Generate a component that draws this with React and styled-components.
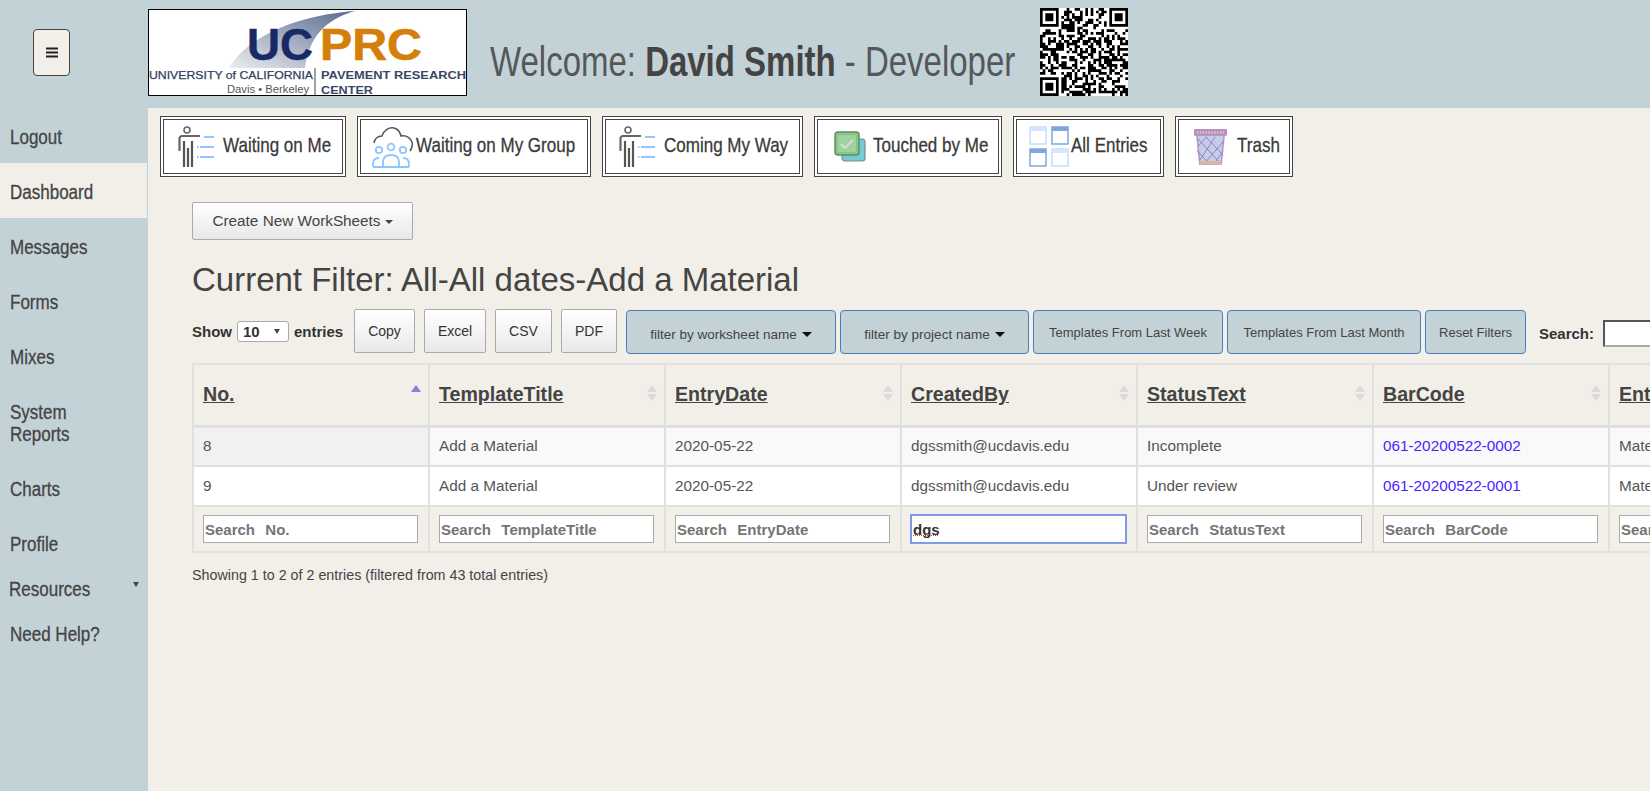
import React from "react";
import styled, { createGlobalStyle } from "styled-components";

const GlobalStyle = createGlobalStyle`
  html, body { margin: 0; padding: 0; height: 100%; overflow: hidden; background: #f2efe9; }
  * { box-sizing: border-box; }
  body { font-family: "Liberation Sans", Arial, sans-serif; color: #444; }
`;

const Page = styled.div`
  display: grid;
  grid-template-columns: 148px 1fr;
  grid-template-rows: 108px 1fr;
  width: 1650px;
  height: 791px;
  overflow: hidden;
  background: #c3d2d7;
`;
const MenuCell = styled.div`
  padding: 29px 0 0 33px;
`;
const MenuButton = styled.button`
  width: 37px;
  height: 47px;
  background: #f2efe9;
  border: 1px solid #444;
  border-radius: 4px;
  padding: 0;
  display: flex;
  align-items: center;
  justify-content: center;
`;
const Header = styled.header`
  display: flex;
  align-items: flex-start;
  padding-top: 9px;
  min-width: 0;
`;
const LogoBox = styled.div`
  width: 319px;
  height: 87px;
  border: 1px solid #000;
  background: #fff;
  flex: none;
`;
const Title = styled.h1`
  margin: 28px 0 0 23px;
  width: 528px;
  flex: none;
  font: 400 42px/50px "Liberation Sans", sans-serif;
  color: #55585a;
  white-space: nowrap;
  transform: scaleX(0.785);
  transform-origin: 0 50%;
  b { font-weight: 700; color: #444; }
`;
const QrBox = styled.div`
  margin: -1px 0 0 22px;
  width: 88px;
  height: 88px;
  flex: none;
`;
const Nav = styled.nav`
  display: flex;
  flex-direction: column;
`;
const NavItem = styled.a`
  display: block;
  width: 147px;
  padding: ${(p) => (p.$tight ? "8px 0 5px 9px" : "18px 10px 15px 10px")};
  font: 400 20px/22px "Liberation Sans", sans-serif;
  color: #444;
  background: ${(p) => (p.$active ? "#f2efe9" : "transparent")};
  position: relative;
`;
const NavText = styled.span`
  display: inline-block;
  white-space: nowrap;
  -webkit-text-stroke: 0.3px #444;
  transform: scaleX(0.85);
  transform-origin: 0 50%;
`;
const NavCaret = styled.span`
  position: absolute;
  right: 8px;
  top: 12px;
  border-left: 3px solid transparent;
  border-right: 3px solid transparent;
  border-top: 5px solid #444;
`;
const Main = styled.main`
  background: #f2efe9;
  overflow: hidden;
  min-width: 0;
  padding-top: 8px;
`;
const Tabs = styled.div`
  display: flex;
  gap: 11px;
  padding-left: 12px;
`;
const Tab = styled.a`
  width: ${(p) => p.$w}px;
  height: 61px;
  flex: none;
  display: flex;
  align-items: center;
  gap: ${(p) => p.$gap}px;
  padding-left: ${(p) => p.$pad}px;
  border: 4px double #444;
  background: #fff;
  color: #3a3a3a;
  white-space: nowrap;
  svg { flex: none; }
`;
const TabText = styled.span`
  flex: 1;
  min-width: 0;
  margin-top: -3px;
  font: 400 21px/24px "Liberation Sans", sans-serif;
  -webkit-text-stroke: 0.3px #3a3a3a;
  transform: scaleX(0.81);
  transform-origin: 0 50%;
`;
const Content = styled.div`
  padding: 25px 0 0 44px;
`;
const CreateButton = styled.button`
  width: 221px;
  height: 38px;
  padding: 0;
  border: 1px solid #aaa;
  border-radius: 2px;
  background: linear-gradient(#ffffff, #e8e8e8);
  font: 400 15.3px "Liberation Sans", sans-serif;
  color: #444;
`;
const Caret = styled.span`
  display: inline-block;
  margin-left: ${(p) => p.$gap ?? 4}px;
  vertical-align: ${(p) => p.$lift ?? 2}px;
  border-left: ${(p) => p.$size ?? 4}px solid transparent;
  border-right: ${(p) => p.$size ?? 4}px solid transparent;
  border-top: ${(p) => p.$size ?? 4}px solid ${(p) => p.$color ?? "#444"};
`;
const Heading = styled.h2`
  margin: 19px 0 0;
  font: 400 33px/42px "Liberation Sans", sans-serif;
  color: #444;
  white-space: nowrap;
`;
const Toolbar = styled.div`
  display: flex;
  align-items: flex-start;
  margin-top: 8px;
  width: 1500px;
`;
const ShowLabel = styled.div`
  display: flex;
  align-items: center;
  gap: 5px;
  width: 162px;
  flex: none;
  height: 44px;
  font: 700 15px "Liberation Sans", sans-serif;
  color: #333;
  white-space: nowrap;
`;
const LengthSelect = styled.span`
  width: 52px;
  height: 21px;
  border: 1px solid #aaa;
  border-radius: 3px;
  background: #fff;
  padding: 0 5px;
  display: flex;
  align-items: center;
  justify-content: space-between;
  font: 700 15px "Liberation Sans", sans-serif;
`;
const SelectCaret = styled.span`
  border-left: 3px solid transparent;
  border-right: 3px solid transparent;
  border-top: 5px solid #444;
  margin-right: 3px;
`;
const ExportButton = styled.button`
  width: ${(p) => p.$w}px;
  height: 44px;
  flex: none;
  margin-right: 9px;
  padding: 0;
  border: 1px solid #aaa;
  border-radius: 2px;
  background: linear-gradient(#ffffff, #e9e9e9);
  font: 400 14px "Liberation Sans", sans-serif;
  color: #333;
`;
const FilterButton = styled.button`
  width: ${(p) => p.$w}px;
  height: 44px;
  flex: none;
  margin: 1px 4px 0 0;
  padding: ${(p) => (p.$drop ? "4px 0 0" : "0")};
  border: 1px solid #4a7cc0;
  border-radius: 4px;
  background: #c3d2d7;
  font: 400 ${(p) => (p.$drop ? "13.5px" : "13px")} "Liberation Sans", sans-serif;
  color: #444;
  white-space: nowrap;
`;
const SearchLabel = styled.label`
  display: flex;
  align-items: center;
  gap: 9px;
  height: 44px;
  margin: 2px 0 0 9px;
  font: 700 15px "Liberation Sans", sans-serif;
  color: #333;
`;
const SearchInput = styled.input`
  width: 100px;
  height: 27px;
  border: 2px inset #aaa;
  background: #fff;
`;
const TableWrap = styled.div`
  margin-top: 8px;
  width: 1700px;
`;
const Table = styled.table`
  border-collapse: collapse;
  table-layout: fixed;
  width: 1652px;
  font: 400 15.3px "Liberation Sans", sans-serif;
  color: #555;
  border: 2px solid #e0e0e0;
`;
const HeadCell = styled.th`
  position: relative;
  height: 62px;
  padding: 0 10px 1px 9px;
  border: 2px solid #e0e0e0;
  border-bottom-width: 3px;
  text-align: left;
  font: 700 19.6px "Liberation Sans", sans-serif;
  color: #444;
  text-decoration: underline;
  white-space: nowrap;
  overflow: hidden;
`;
const SortIcon = styled.span`
  position: absolute;
  right: 7px;
  top: 20px;
  display: flex;
  flex-direction: column;
  gap: 2px;
  &::before, &::after {
    content: "";
    border-left: 5px solid transparent;
    border-right: 5px solid transparent;
  }
  &::before { border-bottom: 7px solid ${(p) => (p.$active ? "#8b7fd6" : "#dadada")}; }
  &::after { border-top: 7px solid ${(p) => (p.$active ? "transparent" : "#dadada")}; }
`;
const Row = styled.tr`
  background: ${(p) => (p.$odd ? "#f9f9f9" : "#ffffff")};
`;
const Cell = styled.td`
  height: 40px;
  padding: 0 10px 0 9px;
  border: 2px solid #e0e0e0;
  white-space: nowrap;
  overflow: hidden;
  background: ${(p) => (p.$sorted ? "#f1f1f1" : "transparent")};
`;
const LinkText = styled.a`
  color: #4a1fff;
`;
const FilterCell = styled.td`
  height: 46px;
  padding: 0 10px 0 9px;
  border: 2px solid #e0e0e0;
  overflow: hidden;
`;
const ColumnSearch = styled.input`
  display: block;
  width: 100%;
  height: 28px;
  padding: 0 2px 0 1px;
  border: 1px solid #aaa;
  outline: none;
  background: #fff;
  font: 700 15px "Liberation Sans", sans-serif;
  color: #333;
  &::placeholder { color: #757575; opacity: 1; word-spacing: 1px; }
`;
const ActiveSearch = styled(ColumnSearch)`
  border-color: #7f9ae8;
  box-shadow: 0 0 0 1px #7f9ae8;
  background:
    repeating-linear-gradient(90deg, #d33 0 1px, transparent 1px 2px) no-repeat 1px 19px / 26px 1px,
    #fff;
`;
const Info = styled.div`
  margin-top: 13px;
  font: 400 14.3px/18px "Liberation Sans", sans-serif;
  color: #444;
`;

const HamburgerIcon = () => (
  <svg width="12" height="11" viewBox="0 0 12 11"><path d="M0 1.5h12M0 5.5h12M0 9.5h12" stroke="#222" strokeWidth="2" /></svg>
);

const Logo = () => (
  <svg width="317" height="85" viewBox="0 0 317 85" fontFamily="Liberation Sans, sans-serif">
    <defs>
      <linearGradient id="sw" x1="0" y1="1" x2="1" y2="0">
        <stop offset="0" stopColor="#eceef2" />
        <stop offset="1" stopColor="#59698f" />
      </linearGradient>
    </defs>
    <path d="M80 58 C 100 25, 150 5, 206 1 C 175 10, 160 28, 156 58 Z" fill="url(#sw)" />
    <text x="98" y="50" fontSize="44" fontWeight="700" fill="#172a66" stroke="#172a66" strokeWidth="0.5" textLength="66" lengthAdjust="spacingAndGlyphs">UC</text>
    <text x="171" y="50" fontSize="44" fontWeight="700" fill="#d37f0a" stroke="#d37f0a" strokeWidth="0.6" textLength="102" lengthAdjust="spacingAndGlyphs">PRC</text>
    <text x="0" y="69" fontSize="11.5" fontWeight="400" fill="#333e60" stroke="#333e60" strokeWidth="0.25" textLength="164" lengthAdjust="spacingAndGlyphs">UNIVERSITY of CALIFORNIA</text>
    <text x="172" y="69" fontSize="11.5" fontWeight="700" fill="#3a4666" textLength="145" lengthAdjust="spacingAndGlyphs">PAVEMENT RESEARCH</text>
    <text x="78" y="83" fontSize="10" fontWeight="400" fill="#555" textLength="82" lengthAdjust="spacingAndGlyphs">Davis • Berkeley</text>
    <text x="172" y="84" fontSize="11.5" fontWeight="700" fill="#3a4666" textLength="52" lengthAdjust="spacingAndGlyphs">CENTER</text>
    <path d="M166 58V85" stroke="#445" strokeWidth="1" />
  </svg>
);

const qrSize = 33;
const qrPath = (() => {
  let seed = 20200522;
  const rnd = () => {
    seed = (seed * 1664525 + 1013904223) >>> 0;
    return (seed >>> 16) / 65536;
  };
  const inFinder = (x, y, ox, oy) => x >= ox && x < ox + 8 && y >= oy && y < oy + 8;
  let d = "";
  const add = (x, y, w = 1, h = 1) => { d += `M${x} ${y}h${w}v${h}h${-w}z`; };
  for (let y = 0; y < qrSize; y++) {
    for (let x = 0; x < qrSize; x++) {
      const f = inFinder(x, y, 0, 0) || inFinder(x, y, 25, 0) || inFinder(x, y, 0, 25);
      if (!f && rnd() < 0.52) add(x, y);
    }
  }
  [[0, 0], [26, 0], [0, 26]].forEach(([ox, oy]) => {
    add(ox, oy, 7, 1); add(ox, oy + 6, 7, 1); add(ox, oy + 1, 1, 5); add(ox + 6, oy + 1, 1, 5); add(ox + 2, oy + 2, 3, 3);
  });
  return d;
})();

const QrCode = () => (
  <svg width="88" height="88" viewBox="0 0 33 33">
    <rect width="33" height="33" fill="#fff" />
    <path d={qrPath} fill="#000" />
  </svg>
);

const PersonIcon = () => (
  <svg width="37" height="41" viewBox="0 0 37 41" fill="none">
    <circle cx="9" cy="4" r="3" stroke="#666" strokeWidth="1.6" />
    <path d="M1.5 25V12.5a2.5 2.5 0 0 1 2.5-2.5h18" stroke="#666" strokeWidth="2.2" />
    <path d="M6 15v26M10 22v19M14 15v26" stroke="#555" strokeWidth="2.2" />
    <path d="M26 11h10M22 21h14M22 31h14" stroke="#93c7ff" strokeWidth="2" />
    <path d="M19 21h1.5M19 31h1.5" stroke="#93c7ff" strokeWidth="2" />
  </svg>
);

const GroupIcon = () => (
  <svg width="41" height="42" viewBox="0 0 41 42" fill="none">
    <path d="M2 17c1-5 4-7 8-7 2-6 7-9 12-8 4 1 6 4 7 8 5-1 9 2 11 6 1 3 0 6-2 9" stroke="#555" strokeWidth="1.5" />
    <circle cx="7" cy="24" r="3.2" stroke="#8fc5ff" strokeWidth="1.8" />
    <circle cx="19" cy="21" r="3.4" stroke="#8fc5ff" strokeWidth="1.8" />
    <circle cx="31" cy="24" r="3.2" stroke="#8fc5ff" strokeWidth="1.8" />
    <path d="M1 41v-3c0-4 2-6 6-6M37 41v-3c0-4-2-6-6-6M11 41v-5c0-5 3-7 8-7s8 2 8 7v5M1 41h36" stroke="#8fc5ff" strokeWidth="1.8" />
  </svg>
);

const TouchedIcon = () => (
  <svg width="32" height="31" viewBox="0 0 32 31" fill="none">
    <rect x="8" y="8" width="23" height="22" rx="3" fill="#73cdd4" stroke="#7c8a8c" strokeWidth="1.2" />
    <rect x="1" y="1" width="24" height="23" rx="3" fill="#85c785" stroke="#6a8a6a" strokeWidth="1.5" />
    <rect x="4" y="4" width="18" height="17" rx="1" fill="#9ed29e" />
    <path d="M7 13l4 4 8-8" stroke="#d8ddd8" strokeWidth="2" />
  </svg>
);

const WindowsIcon = () => (
  <svg width="40" height="41" viewBox="0 0 40 41" fill="none">
    <rect x="1" y="1" width="16" height="17" fill="#fff" stroke="#c3dcff" strokeWidth="1.5" />
    <rect x="1" y="1" width="16" height="4" fill="#d5e6ff" />
    <rect x="23" y="1" width="16" height="17" fill="#fff" stroke="#7ea6e0" strokeWidth="1.5" />
    <rect x="23" y="1" width="16" height="4" fill="#7ea6e0" />
    <rect x="1" y="23" width="16" height="17" fill="#fff" stroke="#7ea6e0" strokeWidth="1.5" />
    <rect x="1" y="23" width="16" height="4" fill="#7ea6e0" />
    <rect x="23" y="23" width="16" height="17" fill="#fff" stroke="#c3dcff" strokeWidth="1.5" />
    <rect x="23" y="23" width="16" height="4" fill="#d5e6ff" />
  </svg>
);

const TrashIcon = () => (
  <svg width="35" height="39" viewBox="0 0 36 40" fill="none">
    <path d="M4 8h28l-3 30H7z" fill="#c3cfe8" stroke="#b395cc" strokeWidth="1.6" />
    <path d="M5 12l22 24M13 10l18 19M4 24l12 13M23 10L7 34M32 14L12 37M14 10L5 20M31 25l-9 12" stroke="#9a78bd" strokeWidth="1" />
    <rect x="1" y="2" width="34" height="7" rx="1" fill="#b98fc7" />
    <path d="M4 5.5h28" stroke="#e8d693" strokeWidth="2" strokeDasharray="1.5 1.5" />
    <rect x="7" y="35" width="22" height="3" fill="#d9b8a0" />
  </svg>
);

const tabs = [
  { label: "Waiting on Me", w: 186, icon: <PersonIcon />, gap: 8, pad: 14 },
  { label: "Waiting on My Group", w: 234, icon: <GroupIcon />, gap: 3, pad: 11 },
  { label: "Coming My Way", w: 201, icon: <PersonIcon />, gap: 8, pad: 13 },
  { label: "Touched by Me", w: 188, icon: <TouchedIcon />, gap: 7, pad: 16 },
  { label: "All Entries", w: 151, icon: <WindowsIcon />, gap: 2, pad: 12 },
  { label: "Trash", w: 118, icon: <TrashIcon />, gap: 9, pad: 14 },
];

const navItems = ["Logout", "Dashboard", "Messages", "Forms", "Mixes"];
const columns = ["No.", "TemplateTitle", "EntryDate", "CreatedBy", "StatusText", "BarCode", "EntryType"];
const rows = [
  ["8", "Add a Material", "2020-05-22", "dgssmith@ucdavis.edu", "Incomplete", "061-20200522-0002", "Material"],
  ["9", "Add a Material", "2020-05-22", "dgssmith@ucdavis.edu", "Under review", "061-20200522-0001", "Material"],
];

export default function App() {
  return (
    <>
      <GlobalStyle />
      <Page>
        <MenuCell>
          <MenuButton aria-label="Menu"><HamburgerIcon /></MenuButton>
        </MenuCell>
        <Header>
          <LogoBox><Logo /></LogoBox>
          <Title>Welcome: <b>David Smith</b> - Developer</Title>
          <QrBox><QrCode /></QrBox>
        </Header>
        <Nav>
          {navItems.map((n) => (
            <NavItem key={n} $active={n === "Dashboard"}><NavText>{n}</NavText></NavItem>
          ))}
          <NavItem><NavText>System<br />Reports</NavText></NavItem>
          <NavItem><NavText>Charts</NavText></NavItem>
          <NavItem><NavText>Profile</NavText></NavItem>
          <NavItem $tight><NavText>Resources</NavText><NavCaret /></NavItem>
          <NavItem><NavText>Need Help?</NavText></NavItem>
        </Nav>
        <Main>
          <Tabs>
            {tabs.map((t) => (
              <Tab key={t.label} $w={t.w} $gap={t.gap} $pad={t.pad}>{t.icon}<TabText>{t.label}</TabText></Tab>
            ))}
          </Tabs>
          <Content>
            <CreateButton>Create New WorkSheets<Caret /></CreateButton>
            <Heading>Current Filter: All-All dates-Add a Material</Heading>
            <Toolbar>
              <ShowLabel>Show <LengthSelect>10<SelectCaret /></LengthSelect> entries</ShowLabel>
              <ExportButton $w={61}>Copy</ExportButton>
              <ExportButton $w={62}>Excel</ExportButton>
              <ExportButton $w={57}>CSV</ExportButton>
              <ExportButton $w={56}>PDF</ExportButton>
              <FilterButton $w={210} $drop>filter by worksheet name<Caret $color="#111" $gap={5} $size={5} /></FilterButton>
              <FilterButton $w={189} $drop>filter by project name<Caret $color="#111" $gap={5} $size={5} /></FilterButton>
              <FilterButton $w={190}>Templates From Last Week</FilterButton>
              <FilterButton $w={194}>Templates From Last Month</FilterButton>
              <FilterButton $w={101}>Reset Filters</FilterButton>
              <SearchLabel>Search: <SearchInput /></SearchLabel>
            </Toolbar>
            <TableWrap>
              <Table>
                <colgroup>
                  {columns.map((c) => <col key={c} style={{ width: 236 }} />)}
                </colgroup>
                <thead>
                  <tr>
                    {columns.map((c, i) => (
                      <HeadCell key={c}>{c}<SortIcon $active={i === 0} /></HeadCell>
                    ))}
                  </tr>
                </thead>
                <tbody>
                  {rows.map((r, ri) => (
                    <Row key={r[5]} $odd={ri === 0}>
                      {r.map((v, i) => (
                        <Cell key={i} $sorted={ri === 0 && i === 0}>
                          {i === 5 ? <LinkText>{v}</LinkText> : v}
                        </Cell>
                      ))}
                    </Row>
                  ))}
                  <tr>
                    {columns.map((c) => (
                      <FilterCell key={c}>
                        {c === "CreatedBy"
                          ? <ActiveSearch defaultValue="dgs" />
                          : <ColumnSearch placeholder={`Search  ${c}`} />}
                      </FilterCell>
                    ))}
                  </tr>
                </tbody>
              </Table>
            </TableWrap>
            <Info>Showing 1 to 2 of 2 entries (filtered from 43 total entries)</Info>
          </Content>
        </Main>
      </Page>
    </>
  );
}
